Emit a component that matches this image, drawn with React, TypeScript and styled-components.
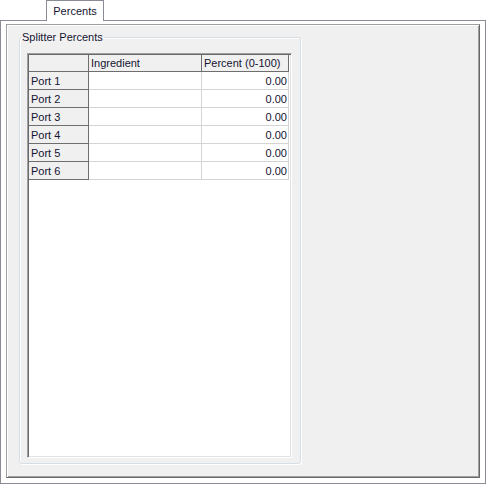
import React from "react";
import styled, { createGlobalStyle } from "styled-components";

const GlobalStyle = createGlobalStyle`
  html, body { margin: 0; padding: 0; background: #ffffff; }
  body { font-family: "Liberation Sans", Arial, sans-serif; font-size: 11px; color: #141432; }
  * { box-sizing: border-box; }
`;

const Root = styled.div`
  width: 486px;
  display: flex;
  flex-direction: column;
`;

const TabStrip = styled.div`
  height: 20px;
  display: flex;
  align-items: flex-start;
  padding-left: 46px;
`;

const Tab = styled.div`
  position: relative;
  z-index: 1;
  width: 58px;
  height: 21px;
  background: #ffffff;
  border: 1px solid #898c95;
  border-bottom: none;
  display: flex;
  align-items: center;
  justify-content: center;
  padding-bottom: 1px;
  font-size: 11px;
  color: #141432;
`;

const Pane = styled.div`
  height: 464px;
  border: 1px solid #898c95;
  background: #ffffff;
  padding: 3px 5px 5px 5px;
`;

const Panel = styled.div`
  width: 474px;
  height: 454px;
  background: #f0f0f0;
  border-top: 1px solid #a0a0a0;
  border-left: 1px solid #a0a0a0;
  border-right: 1px solid #696969;
  border-bottom: 1px solid #696969;
  box-shadow: inset 1px 1px 0 #ffffff, inset -1px -1px 0 #a0a0a0;
  padding: 6px 0 0 12px;
`;

const GroupBox = styled.fieldset`
  width: 282px;
  margin: 0;
  min-width: 0;
  border: 1px solid #d5dfe5;
  border-radius: 3px;
  box-shadow: inset 1px 1px 0 #ffffff, 1px 1px 0 #ffffff;
  padding: 9px 8px 5px 1px;
`;

const Legend = styled.legend`
  padding: 0 1px;
  font-size: 11px;
  line-height: 13px;
  color: #141432;
`;

const GridFrame = styled.div`
  margin-left: 6px;
  width: 265px;
  height: 405px;
  background: #ffffff;
  border-top: 1px solid #a0a0a0;
  border-left: 1px solid #a0a0a0;
  border-right: 1px solid #ffffff;
  border-bottom: 1px solid #ffffff;
  box-shadow: inset 1px 1px 0 #696969, inset -1px -1px 0 #e3e3e3;
  padding: 1px;
  display: flex;
  flex-direction: column;
`;

const Row = styled.div<{ $header?: boolean }>`
  display: grid;
  grid-template-columns: 60px 113px 87px;
  height: ${(p) => (p.$header ? 17 : 18)}px;
`;

const HeadCell = styled.div`
  background: #f0f0f0;
  border-right: 1px solid #6e6e6e;
  border-bottom: 1px solid #6e6e6e;
  display: flex;
  align-items: center;
  padding: 0 2px;
  font-size: 11px;
  color: #141432;
  white-space: nowrap;
  overflow: hidden;
`;

const DataCell = styled.div<{ $align?: "left" | "right" }>`
  background: #ffffff;
  border-right: 1px solid #d4d4d4;
  border-bottom: 1px solid #d4d4d4;
  display: flex;
  align-items: center;
  justify-content: ${(p) => (p.$align === "right" ? "flex-end" : "flex-start")};
  padding: 0 1px 0 2px;
  font-size: 11px;
  color: #141432;
  white-space: nowrap;
`;

const ports = [
  { name: "Port 1", ingredient: "", percent: "0.00" },
  { name: "Port 2", ingredient: "", percent: "0.00" },
  { name: "Port 3", ingredient: "", percent: "0.00" },
  { name: "Port 4", ingredient: "", percent: "0.00" },
  { name: "Port 5", ingredient: "", percent: "0.00" },
  { name: "Port 6", ingredient: "", percent: "0.00" },
];

export default function App() {
  return (
    <>
      <GlobalStyle />
      <Root>
        <TabStrip>
          <Tab>Percents</Tab>
        </TabStrip>
        <Pane>
          <Panel>
            <GroupBox>
              <Legend>Splitter Percents</Legend>
              <GridFrame>
                <Row $header>
                  <HeadCell />
                  <HeadCell>Ingredient</HeadCell>
                  <HeadCell>Percent (0-100)</HeadCell>
                </Row>
                {ports.map((p) => (
                  <Row key={p.name}>
                    <HeadCell>{p.name}</HeadCell>
                    <DataCell>{p.ingredient}</DataCell>
                    <DataCell $align="right">{p.percent}</DataCell>
                  </Row>
                ))}
              </GridFrame>
            </GroupBox>
          </Panel>
        </Pane>
      </Root>
    </>
  );
}
